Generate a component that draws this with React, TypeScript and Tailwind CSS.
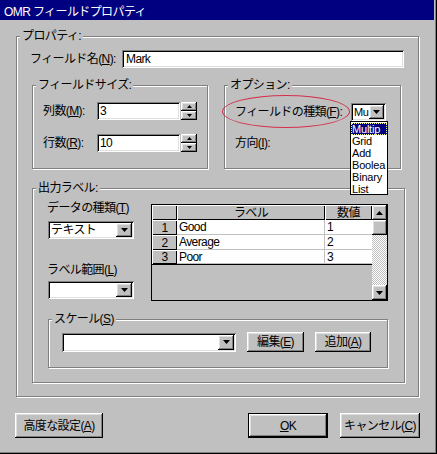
import React from "react";

const raised =
  "shadow-[inset_-1px_-1px_0_#000000,inset_1px_1px_0_#ffffff,inset_-2px_-2px_0_#808080,inset_2px_2px_0_#dfdfdf]";
const sunken =
  "shadow-[inset_1px_1px_0_#808080,inset_-1px_-1px_0_#ffffff,inset_2px_2px_0_#000000,inset_-2px_-2px_0_#dfdfdf]";
const fixedCell =
  "bg-[#c0c0c0] flex items-center shadow-[inset_1px_1px_0_#ffffff,inset_-1px_-1px_0_#000000]";

function Down({ w = 7 }: { w?: number }) {
  return (
    <svg width={w} height={Math.ceil(w / 2)} viewBox={`0 0 ${w} ${Math.ceil(w / 2)}`}>
      <path d={`M0 0 L${w} 0 L${w / 2} ${Math.ceil(w / 2)} Z`} fill="#000" />
    </svg>
  );
}
function Up({ w = 7 }: { w?: number }) {
  return (
    <svg width={w} height={Math.ceil(w / 2)} viewBox={`0 0 ${w} ${Math.ceil(w / 2)}`}>
      <path d={`M0 ${Math.ceil(w / 2)} L${w} ${Math.ceil(w / 2)} L${w / 2} 0 Z`} fill="#000" />
    </svg>
  );
}

function Group({
  label,
  className,
  children,
}: {
  label: React.ReactNode;
  className: string;
  children?: React.ReactNode;
}) {
  return (
    <div
      className={`relative border border-[#808080] shadow-[inset_1px_1px_0_#ffffff,1px_1px_0_#ffffff] ${className}`}
    >
      <span className="absolute -top-[8px] left-[3px] bg-[#c0c0c0] px-[2px] leading-[14px] whitespace-nowrap">
        {label}
      </span>
      {children}
    </div>
  );
}

function Combo({ className, text }: { className: string; text?: string }) {
  return (
    <div className={`${sunken} bg-white flex items-stretch p-[2px] ${className}`}>
      <div className="flex-1 overflow-hidden whitespace-nowrap pl-[1px] leading-[14px] flex items-center">
        {text}
      </div>
      <div className={`w-[16px] bg-[#c0c0c0] ${raised} flex items-center justify-center`}>
        <Down />
      </div>
    </div>
  );
}

function Spinner() {
  return (
    <div className="flex flex-col ml-[1px] w-[16px] h-[18px]">
      <div className={`h-[9px] bg-[#c0c0c0] ${raised} flex items-center justify-center`}>
        <Up w={5} />
      </div>
      <div className={`h-[9px] bg-[#c0c0c0] ${raised} flex items-center justify-center`}>
        <Down w={5} />
      </div>
    </div>
  );
}

function Button({ className, children }: { className: string; children: React.ReactNode }) {
  return (
    <div className={`bg-[#c0c0c0] ${raised} flex items-center justify-center whitespace-nowrap ${className}`}>
      {children}
    </div>
  );
}

function Grid() {
  const rows = [
    ["1", "Good", "1"],
    ["2", "Average", "2"],
    ["3", "Poor", "3"],
  ];
  return (
    <div className="ml-[17px] mt-[3px] w-[237px] h-[97px] border border-black flex bg-[#c0c0c0]">
      <div className="flex flex-col w-[220px]">
        <div className="flex h-[15px]">
          <div className={`w-[25px] ${fixedCell}`} />
          <div className={`w-[148px] ${fixedCell} justify-center`}>ラベル</div>
          <div className={`w-[47px] ${fixedCell} justify-center`}>数値</div>
        </div>
        {rows.map((r, i) => (
          <div
            key={r[0]}
            className={i === 2 ? "flex h-[15px] border-b border-black" : "flex h-[15px]"}
          >
            <div className={`w-[25px] ${fixedCell} justify-center`}>{r[0]}</div>
            <div className="w-[148px] bg-white border-r border-b border-[#c0c0c0] pl-[2px] flex items-center">
              {r[1]}
            </div>
            <div className="w-[47px] bg-white border-b border-[#c0c0c0] pl-[2px] flex items-center">
              {r[2]}
            </div>
          </div>
        ))}
      </div>
      <div className="w-[15px] flex flex-col">
        <div className={`h-[15px] bg-[#c0c0c0] ${raised} flex items-center justify-center`}>
          <Up />
        </div>
        <div className={`h-[15px] bg-[#c0c0c0] ${raised}`} />
        <div className="flex-1 bg-[image:repeating-conic-gradient(#c0c0c0_0%_25%,#ffffff_0%_50%)] bg-[length:2px_2px]" />
        <div className={`h-[15px] bg-[#c0c0c0] ${raised} flex items-center justify-center`}>
          <Down />
        </div>
      </div>
    </div>
  );
}

export default function App() {
  const items = ["Multip", "Grid", "Add", "Boolea", "Binary", "List"];
  return (
    <div className="relative w-[437px] h-[454px] bg-[#c0c0c0] overflow-hidden text-black text-[12px] leading-[14px] tracking-[-0.6px] font-['Liberation_Sans','Noto_Sans_CJK_JP',sans-serif] shadow-[inset_-1px_-1px_0_#000000,inset_-2px_-2px_0_#808080]">
      <div className="w-[434px] h-[20px] bg-[#000080] text-white pl-[4px] pt-[5px] leading-[14px]">
        OMR フィールドプロパティ
      </div>

      <Group label="プロパティ:" className="ml-[16px] mt-[16px] w-[403px] h-[361px]">
        <div className="flex items-center ml-[13px] mt-[13px] h-[18px]">
          <div className="w-[92px]">
            フィールド名(<u>N</u>):
          </div>
          <div className={`${sunken} bg-white w-[282px] h-[18px] pl-[4px] flex items-center`}>Mark</div>
        </div>

        <div className="flex ml-[15px] mt-[17px] gap-[16px]">
          <Group label="フィールドサイズ:" className="w-[176px] h-[84px]">
            <div className="flex flex-col ml-[10px] mt-[16px] gap-[14px]">
              <div className="flex items-center h-[18px]">
                <div className="w-[54px]">
                  列数(<u>M</u>):
                </div>
                <div className={`${sunken} bg-white w-[83px] h-[18px] pl-[3px] flex items-center`}>3</div>
                <Spinner />
              </div>
              <div className="flex items-center h-[18px]">
                <div className="w-[54px]">
                  行数(<u>R</u>):
                </div>
                <div className={`${sunken} bg-white w-[83px] h-[18px] pl-[3px] flex items-center`}>10</div>
                <Spinner />
              </div>
            </div>
          </Group>

          <Group label="オプション:" className="w-[177px] h-[84px]">
            <div className="flex flex-col ml-[10px] mt-[17px]">
              <div className="flex items-center h-[18px]">
                <div className="w-[116px] whitespace-nowrap">
                  フィールドの種類(<u>F</u>):
                </div>
                <div className={`${sunken} bg-white flex items-stretch p-[2px] w-[35px] h-[18px]`}>
                  <div className="flex-1 whitespace-nowrap pl-[1px] text-[11px] tracking-[-0.3px] leading-[14px] flex items-center">
                    Mu
                  </div>
                  <div className={`w-[16px] bg-[#c0c0c0] ${raised} flex items-center justify-center`}>
                    <Down />
                  </div>
                </div>
              </div>
              <div className="flex items-center h-[18px] mt-[13px]">
                <div>
                  方向(<u>I</u>):
                </div>
              </div>
            </div>
            <div className="absolute left-[-3px] top-[9px] w-[128px] h-[33px] rounded-[50%] border border-[#d4304c]" />
            <div className="absolute z-10 left-[125px] top-[35px] w-[38px] h-[74px] bg-white border border-black py-[1px] overflow-hidden text-[11px] tracking-[-0.2px]">
              {items.map((t, i) => (
                <div
                  key={t}
                  className={
                    i === 0
                      ? "h-[12px] leading-[12px] whitespace-nowrap bg-[#000080] text-white outline-1 outline-dotted outline-[#ffff80] -outline-offset-1 pl-[1px]"
                      : "h-[12px] leading-[12px] whitespace-nowrap pl-[1px]"
                  }
                >
                  {t}
                </div>
              ))}
            </div>
          </Group>
        </div>

        <Group label="出力ラベル:" className="ml-[15px] mt-[19px] w-[373px] h-[195px]">
          <div className="flex ml-[15px] mt-[12px]">
            <div className="flex flex-col w-[86px]">
              <div className="h-[14px] whitespace-nowrap -ml-[1px]">
                データの種類(<u>T</u>)
              </div>
              <Combo className="mt-[6px] w-[86px] h-[18px]" text="テキスト" />
              <div className="mt-[24px] h-[14px] whitespace-nowrap -ml-[1px]">
                ラベル範囲(<u>L</u>)
              </div>
              <Combo className="mt-[4px] w-[86px] h-[18px]" />
            </div>
            <Grid />
          </div>

          <Group
            label={
              <>
                スケール(<u>S</u>)
              </>
            }
            className="ml-[15px] mt-[18px] w-[340px] h-[49px]"
          >
            <div className="flex items-center ml-[13px] mt-[12px]">
              <Combo className="w-[174px] h-[19px]" />
              <Button className="ml-[11px] w-[57px] h-[20px]">
                編集(<u>E</u>)
              </Button>
              <Button className="ml-[11px] w-[56px] h-[20px]">
                追加(<u>A</u>)
              </Button>
            </div>
          </Group>
        </Group>
      </Group>

      <div className="flex mt-[16px] ml-[15px]">
        <Button className="w-[88px] h-[25px]">
          高度な設定(<u>A</u>)
        </Button>
        <div className="ml-[145px] w-[80px] h-[25px] border border-black flex">
          <Button className="flex-1">
            <u>O</u>K
          </Button>
        </div>
        <Button className="ml-[12px] w-[80px] h-[25px]">
          キャンセル(<u>C</u>)
        </Button>
      </div>
    </div>
  );
}
